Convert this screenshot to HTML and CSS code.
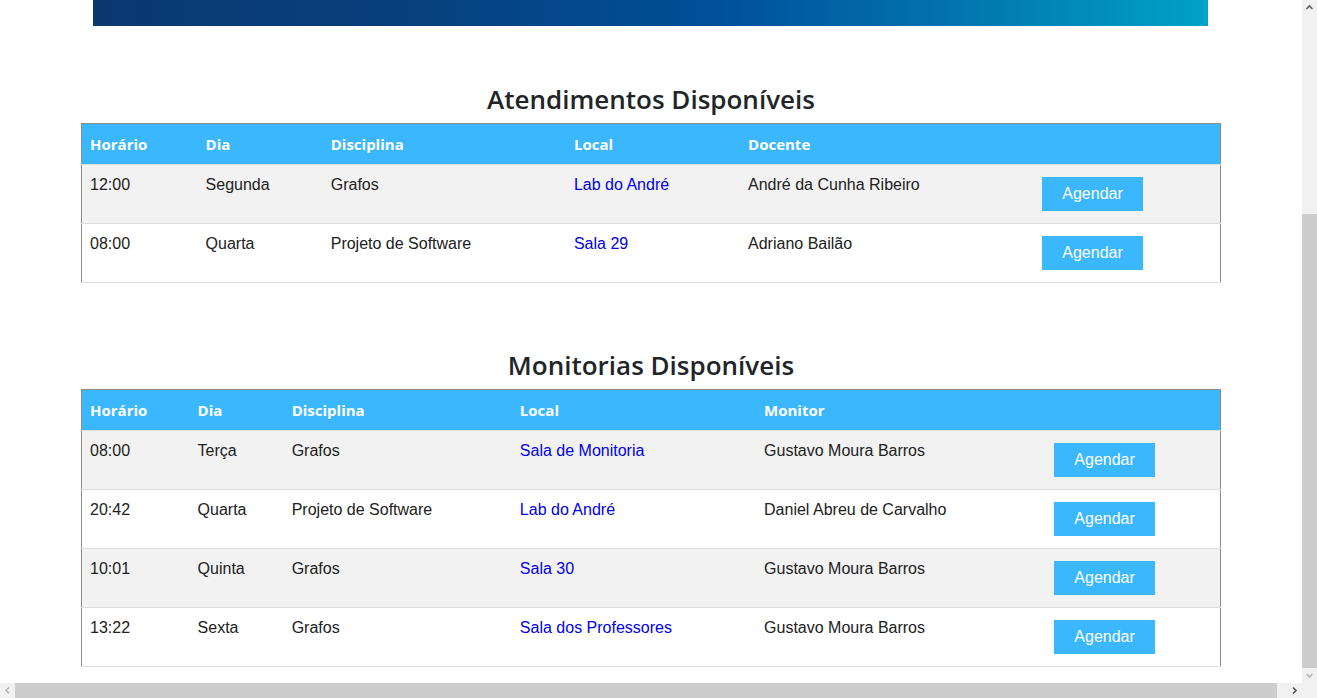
FILE: index.html
```html
<!DOCTYPE html>
<html lang="pt-BR">
<head>
<meta charset="utf-8">
<title>Atendimentos e Monitorias</title>
<link rel="stylesheet" href="styles.css">
</head>
<body>
<div class="screen">
  <div class="viewport">
    <div class="page">
      <div class="banner"></div>

      <section class="block block-first">
        <h3 class="title">Atendimentos Disponíveis</h3>
        <table class="grid t1">
          <colgroup><col><col><col><col><col><col></colgroup>
          <thead>
            <tr><th>Horário</th><th>Dia</th><th>Disciplina</th><th>Local</th><th>Docente</th><th></th></tr>
          </thead>
          <tbody>
            <tr><td>12:00</td><td>Segunda</td><td>Grafos</td><td><a href="#">Lab do André</a></td><td>André da Cunha Ribeiro</td><td><button class="btn">Agendar</button></td></tr>
            <tr><td>08:00</td><td>Quarta</td><td>Projeto de Software</td><td><a href="#">Sala 29</a></td><td>Adriano Bailão</td><td><button class="btn">Agendar</button></td></tr>
          </tbody>
        </table>
      </section>

      <section class="block block-second">
        <h3 class="title">Monitorias Disponíveis</h3>
        <table class="grid t2">
          <colgroup><col><col><col><col><col><col></colgroup>
          <thead>
            <tr><th>Horário</th><th>Dia</th><th>Disciplina</th><th>Local</th><th>Monitor</th><th></th></tr>
          </thead>
          <tbody>
            <tr><td>08:00</td><td>Terça</td><td>Grafos</td><td><a href="#">Sala de Monitoria</a></td><td>Gustavo Moura Barros</td><td><button class="btn">Agendar</button></td></tr>
            <tr><td>20:42</td><td>Quarta</td><td>Projeto de Software</td><td><a href="#">Lab do André</a></td><td>Daniel Abreu de Carvalho</td><td><button class="btn">Agendar</button></td></tr>
            <tr><td>10:01</td><td>Quinta</td><td>Grafos</td><td><a href="#">Sala 30</a></td><td>Gustavo Moura Barros</td><td><button class="btn">Agendar</button></td></tr>
            <tr><td>13:22</td><td>Sexta</td><td>Grafos</td><td><a href="#">Sala dos Professores</a></td><td>Gustavo Moura Barros</td><td><button class="btn">Agendar</button></td></tr>
          </tbody>
        </table>
      </section>
    </div>
  </div>

  <div class="vscroll">
    <div class="arrow arrow-up">
      <svg width="15" height="15" viewBox="0 0 15 15"><path d="M4.5 9 L7.5 6 L10.5 9" fill="none" stroke="#606060" stroke-width="1.6"/></svg>
    </div>
    <div class="vtrack"><div class="vthumb"></div></div>
    <div class="arrow arrow-down">
      <svg width="15" height="15" viewBox="0 0 15 15"><path d="M4.5 6 L7.5 9 L10.5 6" fill="none" stroke="#b5b5b5" stroke-width="1.6"/></svg>
    </div>
  </div>

  <div class="hscroll">
    <div class="arrow arrow-left">
      <svg width="15" height="15" viewBox="0 0 15 15"><path d="M9 4.5 L6 7.5 L9 10.5" fill="none" stroke="#b5b5b5" stroke-width="1.6"/></svg>
    </div>
    <div class="htrack"><div class="hthumb"></div></div>
    <div class="arrow arrow-right">
      <svg width="15" height="15" viewBox="0 0 15 15"><path d="M6 4.5 L9 7.5 L6 10.5" fill="none" stroke="#505050" stroke-width="1.6"/></svg>
    </div>
  </div>

  <div class="corner"></div>
</div>
</body>
</html>
```
FILE: styles.css
```css
* { box-sizing: border-box; }

html, body {
  margin: 0;
  padding: 0;
  height: 100%;
  overflow: hidden;
  background: #ffffff;
}

body {
  font-family: "Liberation Sans", Arial, sans-serif;
  font-size: 16px;
  color: #212529;
}

.screen {
  display: grid;
  grid-template-columns: 1302px 15px;
  grid-template-rows: 683px 15px;
  width: 1317px;
  height: 698px;
}

.viewport {
  overflow: hidden;
  background: #fff;
}

.page {
  width: 1302px;
}

.banner {
  height: 26px;
  margin: 0 94px 0 93px;
  background: linear-gradient(to right, #0b386f 0%, #07417f 30%, #004f98 55%, #0270ad 75%, #00a2c6 100%);
}

.block-first { padding-top: 56px; }
.block-second { padding-top: 65px; }

.title {
  margin: 0 0 7px 0;
  text-align: center;
  font-family: "Open Sans", "Noto Sans", sans-serif;
  font-weight: 600;
  font-size: 26px;
  line-height: 34px;
  color: #212529;
}

.grid {
  width: 1140px;
  margin: 0 auto;
  border-collapse: collapse;
  table-layout: fixed;
  border: 1px solid #8c8c8c;
}

.grid th {
  background: #3ab7fd;
  color: #ffffff;
  font-family: "Open Sans", "Noto Sans", sans-serif;
  font-weight: 700;
  font-size: 15px;
  line-height: 24px;
  text-align: left;
  padding: 8px;
  vertical-align: top;
  border-bottom: 1px solid #dcdcdc;
}

.grid td {
  padding: 8px;
  line-height: 24px;
  vertical-align: top;
  text-align: left;
  border-bottom: 1px solid #dcdcdc;
  color: #212121;
}

.grid tbody tr:nth-child(odd) td { background: #f2f2f2; }
.grid tbody tr:nth-child(even) td { background: #ffffff; }

.grid a {
  color: #0000ee;
  text-decoration: none;
}

.btn {
  display: inline-block;
  margin: 4px 2px;
  padding: 8px 20px;
  height: 34px;
  border: none;
  background: #3ab7fd;
  color: #ffffff;
  font-family: "Liberation Sans", Arial, sans-serif;
  font-size: 16px;
  line-height: 18px;
  cursor: pointer;
  vertical-align: top;
}

.t1 col:nth-child(1) { width: 116px; }
.t1 col:nth-child(2) { width: 125px; }
.t1 col:nth-child(3) { width: 243px; }
.t1 col:nth-child(4) { width: 174px; }
.t1 col:nth-child(5) { width: 292px; }
.t1 col:nth-child(6) { width: 188px; }

.t2 col:nth-child(1) { width: 108px; }
.t2 col:nth-child(2) { width: 94px; }
.t2 col:nth-child(3) { width: 228px; }
.t2 col:nth-child(4) { width: 244px; }
.t2 col:nth-child(5) { width: 288px; }
.t2 col:nth-child(6) { width: 176px; }

/* fake browser scrollbars */
.vscroll {
  display: flex;
  flex-direction: column;
  background: #f1f1f1;
}
.vtrack {
  flex: 1;
  display: flex;
  flex-direction: column;
  padding-top: 199px;
}
.vthumb {
  flex: 1;
  background: #cdcdcd;
}

.hscroll {
  display: flex;
  background: #f1f1f1;
}
.htrack {
  flex: 1;
  display: flex;
  padding-right: 10px;
}
.hthumb {
  flex: 1;
  background: #cdcdcd;
}

.arrow {
  width: 15px;
  height: 15px;
  flex: none;
  display: flex;
}

.corner { background: #f1f1f1; }
```
